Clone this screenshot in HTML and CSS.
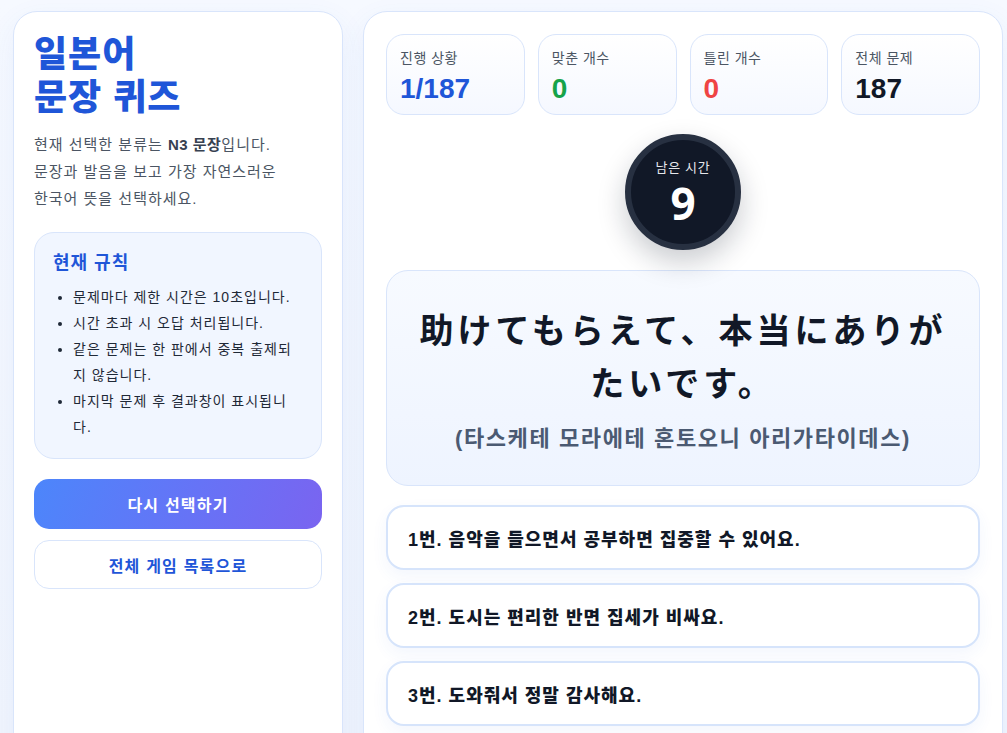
FILE: index.html
```html
<!DOCTYPE html>
<html lang="ko">
<head>
<meta charset="utf-8">
<title>일본어 문장 퀴즈</title>
<link rel="stylesheet" href="styles.css">
</head>
<body>
<div class="page">
  <aside class="side">
    <h1 class="title">일본어<br>문장 퀴즈</h1>
    <p class="desc">현재 선택한 분류는 <strong>N3 문장</strong>입니다.<br>문장과 발음을 보고 가장 자연스러운<br>한국어 뜻을 선택하세요.</p>
    <section class="rules">
      <h2 class="rules-title">현재 규칙</h2>
      <ul class="rules-list">
        <li>문제마다 제한 시간은 10초입니다.</li>
        <li>시간 초과 시 오답 처리됩니다.</li>
        <li>같은 문제는 한 판에서 중복 출제되지 않습니다.</li>
        <li>마지막 문제 후 결과창이 표시됩니다.</li>
      </ul>
    </section>
    <button class="btn btn-primary">다시 선택하기</button>
    <button class="btn btn-outline">전체 게임 목록으로</button>
  </aside>

  <main class="main">
    <div class="stats">
      <div class="stat"><div class="stat-label">진행 상황</div><div class="stat-value blue">1/187</div></div>
      <div class="stat"><div class="stat-label">맞춘 개수</div><div class="stat-value green">0</div></div>
      <div class="stat"><div class="stat-label">틀린 개수</div><div class="stat-value red">0</div></div>
      <div class="stat"><div class="stat-label">전체 문제</div><div class="stat-value dark">187</div></div>
    </div>

    <div class="timer-wrap">
      <div class="timer">
        <div class="timer-label">남은 시간</div>
        <div class="timer-value">9</div>
      </div>
    </div>

    <section class="question">
      <p class="jp">助けてもらえて、本当にありがたいです。</p>
      <p class="reading">(타스케테 모라에테 혼토오니 아리가타이데스)</p>
    </section>

    <div class="options">
      <button class="option">1번. 음악을 들으면서 공부하면 집중할 수 있어요.</button>
      <button class="option">2번. 도시는 편리한 반면 집세가 비싸요.</button>
      <button class="option">3번. 도와줘서 정말 감사해요.</button>
    </div>
  </main>
</div>
</body>
</html>
```

FILE: styles.css
```css
* { box-sizing: border-box; }

html, body {
  margin: 0;
  height: 100%;
  overflow: hidden;
}

body {
  background: linear-gradient(180deg, #f6f9ff 0%, #f1f5fd 100%);
  font-family: "Liberation Sans", "Noto Sans CJK KR", sans-serif;
  color: #111827;
}

.page {
  display: flex;
  align-items: flex-start;
  gap: 20px;
  padding: 11px 4px 0 13px;
}

/* left panel */
.side {
  width: 330px;
  min-height: 800px;
  flex: none;
  background: #fff;
  border: 1px solid #d9e5fb;
  border-radius: 24px;
  padding: 21px 20px;
  box-shadow: 0 10px 30px rgba(59, 110, 220, 0.07);
  display: flex;
  flex-direction: column;
}

.title {
  margin: 0;
  font-size: 36px;
  line-height: 43px;
  font-weight: 800;
  color: #1f56d8;
  letter-spacing: 1px;
}

.desc {
  margin: 12px 0 0;
  font-size: 15px;
  line-height: 27px;
  letter-spacing: 1px;
  color: #4b5563;
}
.desc strong { color: #374151; font-weight: 700; letter-spacing: 0.5px; }

.rules {
  margin-top: 20px;
  background: #f1f6ff;
  border: 1px solid #d9e5fb;
  border-radius: 20px;
  padding: 17px 18px 18px;
}

.rules-title {
  margin: 0;
  font-size: 18px;
  line-height: 26px;
  font-weight: 700;
  letter-spacing: 1px;
  color: #1f56d8;
}

.rules-list {
  margin: 8px 0 0;
  padding-left: 20px;
  font-size: 14px;
  line-height: 26px;
  letter-spacing: 1px;
  color: #1f2937;
}

.btn {
  display: block;
  width: 100%;
  font-family: inherit;
  font-size: 16px;
  font-weight: 700;
  letter-spacing: 1.2px;
  border-radius: 15px;
  cursor: pointer;
}

.btn-primary {
  margin-top: 20px;
  height: 50px;
  border: none;
  color: #fff;
  background: linear-gradient(110deg, #4c86fb 0%, #6673f6 55%, #7a64f0 100%);
}

.btn-outline {
  margin-top: 11px;
  height: 49px;
  background: #fff;
  border: 1px solid #d9e5fb;
  color: #1f56d8;
}

/* main panel */
.main {
  width: 640px;
  min-height: 800px;
  flex: none;
  background: #fff;
  border: 1px solid #d9e5fb;
  border-radius: 24px;
  padding: 22px;
  box-shadow: 0 10px 30px rgba(59, 110, 220, 0.07);
}

.stats {
  display: grid;
  grid-template-columns: repeat(4, 1fr);
  gap: 13px;
}

.stat {
  height: 81px;
  border: 1px solid #d9e5fb;
  border-radius: 18px;
  background: linear-gradient(180deg, #ffffff 0%, #f5f8ff 100%);
  padding: 13px 13px 0;
}

.stat-label {
  font-size: 14px;
  line-height: 20px;
  letter-spacing: 0.5px;
  color: #4b5563;
}

.stat-value {
  margin-top: 5px;
  font-size: 28px;
  line-height: 32px;
  font-weight: 700;
}
.blue { color: #1f56d8; }
.green { color: #16a34a; }
.red { color: #ef4444; }
.dark { color: #111827; }

.timer-wrap {
  display: flex;
  justify-content: center;
  margin-top: 19px;
}

.timer {
  width: 116px;
  height: 116px;
  border-radius: 50%;
  background: #111827;
  border: 6px solid #273041;
  box-shadow: 0 12px 28px rgba(15, 23, 42, 0.22);
  display: flex;
  flex-direction: column;
  align-items: center;
  justify-content: center;
  gap: 6px;
  color: #fff;
  font-family: "Noto Sans", "Noto Sans CJK KR", sans-serif;
}

.timer-label {
  font-size: 13px;
  line-height: 16px;
  letter-spacing: 0.8px;
  color: #e5e7eb;
}

.timer-value {
  font-size: 44px;
  line-height: 44px;
  font-weight: 700;
}

.question {
  margin-top: 20px;
  border: 1px solid #d9e5fb;
  border-radius: 22px;
  background: linear-gradient(180deg, #f7faff 0%, #eef4ff 100%);
  padding: 31px 24px 32px;
  text-align: center;
}

.jp {
  margin: 0;
  font-family: "Noto Sans CJK JP", sans-serif;
  font-size: 34px;
  line-height: 53px;
  font-weight: 700;
  letter-spacing: 4px;
  color: #111827;
}

.reading {
  margin: 17px 0 0;
  font-size: 22px;
  line-height: 28px;
  font-weight: 700;
  letter-spacing: 1.6px;
  color: #4b5a72;
}

.options {
  margin-top: 19px;
  display: flex;
  flex-direction: column;
  gap: 13px;
}

.option {
  height: 65px;
  width: 100%;
  border: 2px solid #d6e4fb;
  border-radius: 18px;
  background: #fff;
  padding: 0 20px;
  text-align: left;
  font-family: "Liberation Sans", "Noto Sans CJK KR", sans-serif;
  font-size: 18px;
  font-weight: 800;
  letter-spacing: 1px;
  color: #111827;
  box-shadow: 0 6px 16px rgba(59, 110, 220, 0.06);
  cursor: pointer;
}
```
